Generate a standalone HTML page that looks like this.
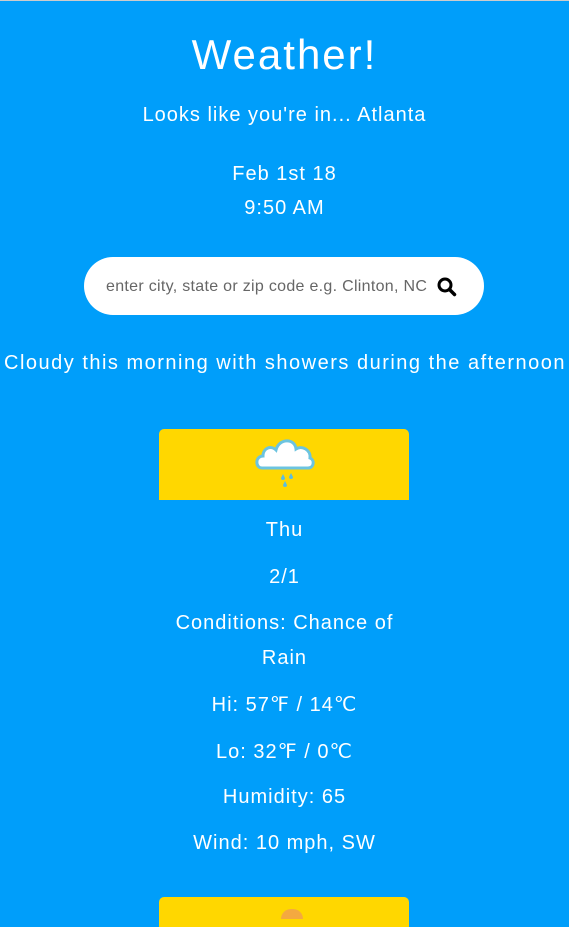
<!DOCTYPE html>
<html><head><style>
body{margin:0;width:569px;height:917px;overflow:hidden;background:#009efa;color:#fff;font-family:"Liberation Sans",sans-serif;border-top:1px solid #ccc;box-sizing:border-box;position:relative}
.a{position:absolute;left:0;width:569px;text-align:center;white-space:nowrap;letter-spacing:1px}
.card{position:absolute;left:159px;width:250px;background:#ffd700;border-radius:5px 5px 0 0}
</style></head><body>
<div class="a" style="top:30px;font-size:42px;letter-spacing:2px">Weather!</div>
<div class="a" style="top:103px;font-size:20px">Looks like you're in... Atlanta</div>
<div class="a" style="top:162px;font-size:20px">Feb 1st 18</div>
<div class="a" style="top:196px;font-size:20px">9:50 AM</div>
<div style="position:absolute;left:84px;top:256px;width:400px;height:58px;border-radius:29px;background:#fff"></div>
<div style="position:absolute;left:106px;top:277px;font-size:16px;color:#666;letter-spacing:0.3px">enter city, state or zip code e.g. Clinton, NC</div>
<svg style="position:absolute;left:437px;top:276px" width="20" height="20" viewBox="0 0 20 20"><circle cx="8" cy="8" r="6" fill="none" stroke="#000" stroke-width="3"/><line x1="12.5" y1="12.5" x2="17.5" y2="17.5" stroke="#000" stroke-width="3.5" stroke-linecap="round"/></svg>
<div class="a" style="top:351px;left:-20px;font-size:20px;width:610px;letter-spacing:1.5px">Cloudy this morning with showers during the afternoon</div>
<div class="card" style="top:428px;height:71px">
<svg style="position:absolute;left:96px;top:5px" width="60" height="55" viewBox="0 0 60 55"><path d="M7 34 C0 34 0 22 8 22 C8 14 16 11 21 16 C24 4 40 4 41 15 C47 11 56 16 55 24 C60 26 59 34 53 34 Z" fill="#fff" stroke="#6cc4e0" stroke-width="3"/><path d="M28 40 l-2 4 a2 2 0 0 0 4 0 z" fill="#5bbde0"/><path d="M36 39 l-2 4 a2 2 0 0 0 4 0 z" fill="#5bbde0"/><path d="M30 47 l-2 4 a2 2 0 0 0 4 0 z" fill="#5bbde0"/></svg>
</div>
<div class="a" style="top:518px;font-size:20px">Thu</div>
<div class="a" style="top:565px;font-size:20px">2/1</div>
<div class="a" style="top:611px;font-size:20px">Conditions: Chance of</div>
<div class="a" style="top:646px;font-size:20px">Rain</div>
<div class="a" style="top:691px;font-size:20px">Hi: 57℉ / 14℃</div>
<div class="a" style="top:738px;font-size:20px">Lo: 32℉ / 0℃</div>
<div class="a" style="top:785px;font-size:20px">Humidity: 65</div>
<div class="a" style="top:831px;font-size:20px">Wind: 10 mph, SW</div>
<div class="card" style="top:896px;height:30px"><div style="position:absolute;left:122px;top:12px;width:22px;height:10px;border-radius:11px 11px 0 0;background:#f4a940"></div></div>
</body></html>
